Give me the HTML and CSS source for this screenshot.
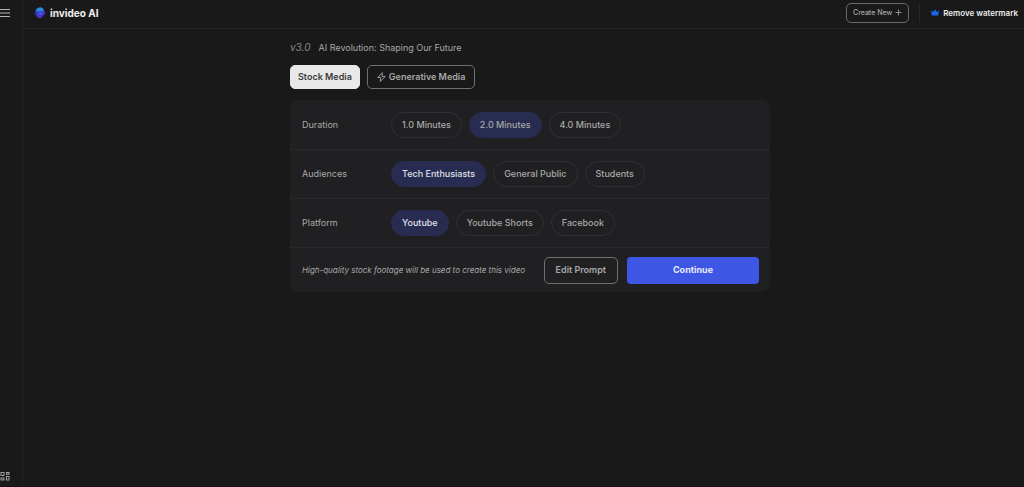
FILE: index.html
```
<!DOCTYPE html>
<html lang="en">
<head>
<meta charset="utf-8">
<meta name="viewport" content="width=device-width, initial-scale=1">
<title>invideo AI</title>
<link rel="stylesheet" href="styles.css">
</head>
<body>
<div class="app">
  <nav class="sidebar" aria-label="Main">
    <button class="icon-button" type="button" aria-label="Menu">
      <svg width="10" height="10" viewBox="0 0 10 10" fill="none" stroke="currentColor" stroke-width="1"><path d="M0 1.500h10M0 5h10M0 8.500h10"/></svg>
    </button>
    <button class="icon-button icon-button-dim" type="button" aria-label="Apps">
      <svg width="10" height="10" viewBox="0 0 10 10" fill="none" stroke="currentColor" stroke-width="1"><rect x="1" y="1.500" width="3" height="3"/><rect x="6.500" y="1.500" width="2.500" height="1.800"/><rect x="1" y="7" width="3" height="2"/><rect x="6.500" y="5.500" width="2.500" height="3.500"/></svg>
    </button>
  </nav>
  <div class="page">
    <header class="topbar">
      <a class="brand" href="#">
        <svg width="12" height="12" viewBox="0 0 12 12"><defs><linearGradient id="g" x1="0" y1="0" x2="1" y2="1"><stop offset="0" stop-color="#1769b8"/><stop offset=".5" stop-color="#3d3fd0"/><stop offset="1" stop-color="#5526c4"/></linearGradient></defs><path d="M3.400 1.200C5 .2 8 .1 9.300 1.600c.5.700.5 1.500.7 2 .7.500 1.400 1.100 1.300 2.100-.1 1.200-1 1.700-1.800 2.500-1 1.400-2.200 3.100-3.700 3.100S3.300 9.900 2.500 8.700C1.300 7.900.2 7.200.4 5.900c.1-1 .9-1.400 1.300-2.200.2-1 .7-1.900 1.700-2.500Z" fill="url(#g)"/><path d="M3.200 1.500C4.900.3 7.800.2 9 1.800c.5.700.4 1.500 0 2.100-1.400.5-4 .4-6.800-.2.100-.9.300-1.700 1-2.200Z" fill="#268fd2"/><path d="M.5 5.400c.6-.9 1.300-.8 1.800.3.500 1.200.2 2.300-.2 2.600C1 7.500.2 6.700.5 5.400Z" fill="#202276"/><path d="M4.800 6.300c1.200.5 2.500.5 3.700 0-.7 1.200-2.900 1.300-3.700 0Z" fill="#8e87ee"/></svg>
        <span>invideo AI</span>
      </a>
      <div class="topbar-actions">
        <button class="create" type="button">Create New
          <svg width="7" height="7" viewBox="0 0 7 7" fill="none" stroke="currentColor" stroke-width=".8"><path d="M3.500 .5v6M.5 3.500h6"/></svg>
        </button>
        <a class="watermark" href="#">
          <svg width="8" height="7" viewBox="0 0 8 7" fill="#1a66e8"><path d="M0 1.500 2.200 3 4 .3 5.800 3 8 1.500 7.200 6.500H.8Z"/></svg>
          <span>Remove watermark</span>
        </a>
      </div>
    </header>
    <main class="content">
      <div class="panel">
        <h1 class="title"><em class="version">v3.0</em><span>AI Revolution: Shaping Our Future</span></h1>
        <div class="modes">
          <button class="mode mode-active" type="button" aria-pressed="true">Stock Media</button>
          <button class="mode mode-outline" type="button" aria-pressed="false">
            <svg width="9" height="10" viewBox="0 0 9 10" fill="none" stroke="currentColor" stroke-width=".9" stroke-linejoin="round"><path d="M5.300.6.700 5.500h3L3.300 9.400l5-5H5Z"/></svg>Generative Media</button>
        </div>
        <section class="card">
          <div class="row" role="group" aria-labelledby="duration">
            <span class="row-label" id="duration">Duration</span>
            <div class="pills">
              <button class="pill" type="button" aria-pressed="false">1.0 Minutes</button>
              <button class="pill pill-suggested" type="button" aria-pressed="true">2.0 Minutes</button>
              <button class="pill" type="button" aria-pressed="false">4.0 Minutes</button>
            </div>
          </div>
          <div class="row" role="group" aria-labelledby="audiences">
            <span class="row-label" id="audiences">Audiences</span>
            <div class="pills">
              <button class="pill pill-selected" type="button" aria-pressed="true">Tech Enthusiasts</button>
              <button class="pill" type="button" aria-pressed="false">General Public</button>
              <button class="pill" type="button" aria-pressed="false">Students</button>
            </div>
          </div>
          <div class="row" role="group" aria-labelledby="platform">
            <span class="row-label" id="platform">Platform</span>
            <div class="pills">
              <button class="pill pill-selected" type="button" aria-pressed="true">Youtube</button>
              <button class="pill" type="button" aria-pressed="false">Youtube Shorts</button>
              <button class="pill" type="button" aria-pressed="false">Facebook</button>
            </div>
          </div>
          <div class="card-footer">
            <p class="note">High-quality stock footage will be used to create this video</p>
            <button class="edit" type="button">Edit Prompt</button>
            <button class="continue" type="button">Continue</button>
          </div>
        </section>
      </div>
    </main>
  </div>
</div>
</body>
</html>
```

FILE: styles.css
```
* { box-sizing: border-box; }
body {
  margin: 0;
  background: #191919;
  color: #a8a8a8;
  font: 9px/12px Inter, "Liberation Sans", sans-serif;
}
button { font: inherit; color: inherit; background: none; border: 0; padding: 0; cursor: pointer; }
a { color: inherit; text-decoration: none; }
svg { display: block; flex: none; }

.app { display: flex; min-height: 100vh; border-bottom: 1px solid #121212; }
.sidebar {
  flex: none;
  width: 23px;
  padding: 8px 0 5px;
  display: flex;
  flex-direction: column;
  justify-content: space-between;
  align-items: flex-start;
  border-right: 1px solid #222222;
}
.icon-button { color: #b4b4b4; }
.icon-button-dim { color: #a0a0a0; }
.page { flex: 1; min-width: 0; }

.topbar {
  display: flex;
  justify-content: space-between;
  align-items: center;
  height: 29px;
  padding: 0 6px 3px 11px;
  border-bottom: 1px solid #262626;
}
.brand { display: flex; align-items: center; gap: 4px; color: #f0f0f0; font-size: 10px; font-weight: 700; }
.topbar-actions { display: flex; align-items: center; }
.create {
  display: flex;
  align-items: center;
  gap: 3px;
  height: 20px;
  padding: 0 6px;
  border: 1px solid #696969;
  border-radius: 5px;
  font-size: 7px;
  font-weight: 500;
}
.watermark {
  display: flex;
  align-items: center;
  gap: 4px;
  height: 18px;
  margin-left: 10px;
  padding-left: 11px;
  border-left: 1px solid #272727;
  color: #ececec;
  font-size: 8px;
  font-weight: 600;
}

.content { padding: 12px 0 24px 13px; }
.panel { width: 100%; max-width: 480px; margin: 0 auto; }
.title { display: flex; gap: 8px; margin: 0; font-size: 9px; line-height: 13px; font-weight: 400; }
.version { color: #858585; font-size: 10px; }
.modes { display: flex; gap: 7px; margin: 11px 0; }
.mode {
  display: flex;
  align-items: center;
  gap: 3px;
  height: 24px;
  padding: 0 7px;
  border: 1px solid #707070;
  border-radius: 5px;
  font-weight: 600;
}
.mode-outline { padding: 0 9px; }
.mode-active { background: #e8e8e8; border-color: #e8e8e8; color: #3a3a3a; }

.card { padding-top: 1px; background: #202022; border-radius: 9px; }
.row { display: flex; align-items: center; min-height: 49px; padding: 0 12px; border-bottom: 1px solid #29292b; }
.row-label { flex: none; width: 89px; }
.pills { display: flex; flex-wrap: wrap; gap: 7px; }
.pill { height: 26px; padding: 0 10px; border: 1px solid #303032; border-radius: 13px; font-weight: 500; }
.pill-suggested { background: #272c50; border-color: #272c50; }
.pill-selected { background: #272c50; border-color: #272c50; color: #e0e0ea; }

.card-footer { display: flex; align-items: center; min-height: 44px; padding: 0 11px 0 12px; }
.note { flex: 1; margin: 0; font-size: 8px; font-style: italic; }
.edit { height: 27px; padding: 0 11px; border: 1px solid #6e6e6f; border-radius: 5px; font-weight: 600; }
.continue {
  width: 132px;
  height: 27px;
  margin-left: 9px;
  border-radius: 4px;
  background: #3d57e4;
  color: #e8ebfc;
  font-weight: 700;
}
```
